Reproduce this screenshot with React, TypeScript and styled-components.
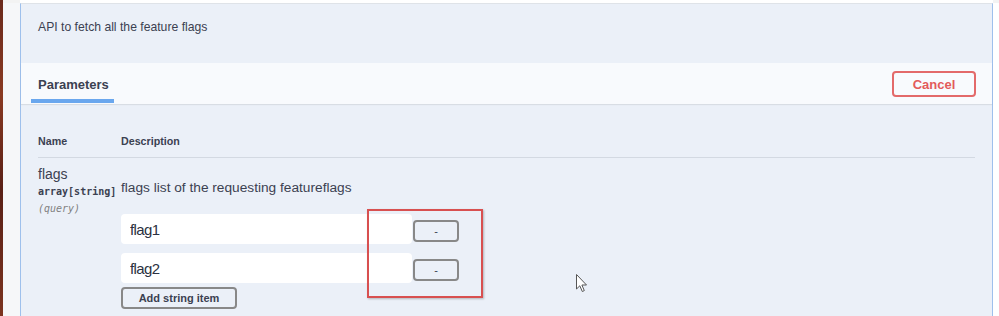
import React from "react";
import styled, { createGlobalStyle } from "styled-components";

const Global = createGlobalStyle`
  html, body { margin: 0; padding: 0; }
  body {
    width: 999px;
    height: 316px;
    overflow: hidden;
    background: #ffffff;
    font-family: "Liberation Sans", Arial, sans-serif;
    color: #3b4151;
  }
`;

const Page = styled.div`
  position: relative;
  display: flex;
  width: 999px;
  height: 316px;
  overflow: hidden;
`;

const BrownStrip = styled.div`
  width: 3px;
  flex: none;
  background: linear-gradient(180deg, #6b2a1c 0%, #8a3a22 30%, #5a2016 60%, #7c3420 100%);
`;

const Gutter = styled.div<{ $w: number; $bg: string }>`
  width: ${(p) => p.$w}px;
  flex: none;
  background: ${(p) => p.$bg};
  border-top: 3px solid #f3f3f3;
`;

const Panel = styled.div`
  flex: 1;
  display: flex;
  flex-direction: column;
  background: #ebf0f8;
  border-left: 1px solid #9ec0ec;
  border-right: 1px solid #9ec0ec;
  border-top: 1px solid #dfe3e8;
  margin-top: 3px;
`;

const Description = styled.div`
  height: 59px;
  box-sizing: border-box;
  padding: 16px 17px 0;
  font-size: 12.2px;
  line-height: 15px;
  color: #3b4151;
`;

const SectionHeader = styled.div`
  height: 41px;
  box-sizing: border-box;
  display: flex;
  align-items: stretch;
  justify-content: space-between;
  padding: 0 16px 0 10px;
  background: #f8fafd;
  box-shadow: 0 1px 1px rgba(0, 0, 0, 0.08);
`;

const Tab = styled.div`
  display: flex;
  align-items: center;
  padding: 6px 7px 0;
  font-size: 13px;
  font-weight: bold;
  color: #3b4151;
  border-bottom: 4px solid #6aa7ee;
  margin-bottom: 1px;
  width: 83px;
  box-sizing: border-box;
`;

const CancelButton = styled.button`
  align-self: center;
  width: 84px;
  height: 26px;
  margin-top: 1px;
  background: transparent;
  border: 2px solid #e36a6a;
  border-radius: 4px;
  color: #e35a5a;
  font-family: "Liberation Sans", Arial, sans-serif;
  font-size: 13px;
  font-weight: bold;
  padding: 0;
`;

const Table = styled.div`
  display: grid;
  grid-template-columns: 83px 1fr;
  padding: 0 17px;
`;

const HeadCell = styled.div`
  padding: 30px 0 9px;
  font-size: 10.7px;
  line-height: 14px;
  font-weight: bold;
  color: #3b4151;
  border-bottom: 1px solid #d3d9e2;
`;

const NameCell = styled.div`
  padding-top: 7px;
  display: flex;
  flex-direction: column;
`;

const ParamName = styled.div`
  font-size: 14px;
  line-height: 18px;
  color: #3b4151;
`;

const ParamType = styled.div`
  font-family: "DejaVu Sans Mono", "Liberation Mono", monospace;
  font-size: 10px;
  font-weight: bold;
  line-height: 18px;
  color: #3b4151;
  white-space: nowrap;
`;

const ParamIn = styled.div`
  font-family: "DejaVu Sans Mono", "Liberation Mono", monospace;
  font-size: 10px;
  font-style: italic;
  line-height: 16px;
  color: #808080;
`;

const DescCell = styled.div`
  padding-top: 22px;
  display: flex;
  flex-direction: column;
  align-items: flex-start;
`;

const DescText = styled.div`
  font-size: 13.7px;
  line-height: 16px;
  color: #3b4151;
  margin-bottom: 18px;
`;

const ItemRow = styled.div`
  display: flex;
  align-items: center;
  gap: 1px;
  margin-bottom: 9px;
`;

const TextInput = styled.input`
  width: 291px;
  height: 30px;
  box-sizing: border-box;
  border: none;
  border-radius: 4px;
  background: #ffffff;
  padding: 0 9px;
  font-family: "Liberation Sans", Arial, sans-serif;
  font-size: 15px;
  letter-spacing: -0.6px;
  color: #2b3141;
  outline: none;
`;

const SmallButton = styled.button<{ $w: number }>`
  width: ${(p) => p.$w}px;
  height: 22px;
  box-sizing: border-box;
  border: 2px solid #888888;
  border-radius: 4px;
  background: transparent;
  color: #3b4151;
  font-family: "Liberation Sans", Arial, sans-serif;
  font-size: 11px;
  font-weight: bold;
  padding: 0;
`;

const RemoveButton = styled(SmallButton)`
  margin-top: 4px;
  align-self: center;
  font-weight: normal;
`;

const AddButton = styled(SmallButton)`
  margin-top: -5px;
`;

const Annotation = styled.div`
  position: absolute;
  left: 367px;
  top: 209px;
  width: 116px;
  height: 89px;
  box-sizing: border-box;
  border: 2px solid #d85050;
  box-shadow: 1px 1px 2px rgba(0, 0, 0, 0.25);
`;

const Cursor = styled.svg`
  position: absolute;
  left: 576px;
  top: 274px;
`;

export default function App() {
  return (
    <>
      <Global />
      <Page>
        <BrownStrip />
        <Gutter $w={17} $bg="#f6f7f9" />
        <Panel>
          <Description>API to fetch all the feature flags</Description>
          <SectionHeader>
            <Tab>Parameters</Tab>
            <CancelButton>Cancel</CancelButton>
          </SectionHeader>
          <Table>
            <HeadCell>Name</HeadCell>
            <HeadCell>Description</HeadCell>
            <NameCell>
              <ParamName>flags</ParamName>
              <ParamType>array[string]</ParamType>
              <ParamIn>(query)</ParamIn>
            </NameCell>
            <DescCell>
              <DescText>flags list of the requesting featureflags</DescText>
              <ItemRow>
                <TextInput defaultValue="flag1" />
                <RemoveButton $w={46}>-</RemoveButton>
              </ItemRow>
              <ItemRow>
                <TextInput defaultValue="flag2" />
                <RemoveButton $w={46}>-</RemoveButton>
              </ItemRow>
              <AddButton $w={116}>Add string item</AddButton>
            </DescCell>
          </Table>
        </Panel>
        <Gutter $w={6} $bg="#ffffff" />
        <Annotation />
        <Cursor width="12" height="19" viewBox="0 0 12 19">
          <path
            d="M0.5 0.5 L0.5 15 L3.8 11.8 L6.3 17.5 L8.3 16.6 L5.9 11 L10.5 11 Z"
            fill="#ffffff"
            stroke="#555555"
            strokeWidth="1"
            strokeLinejoin="round"
          />
        </Cursor>
      </Page>
    </>
  );
}
